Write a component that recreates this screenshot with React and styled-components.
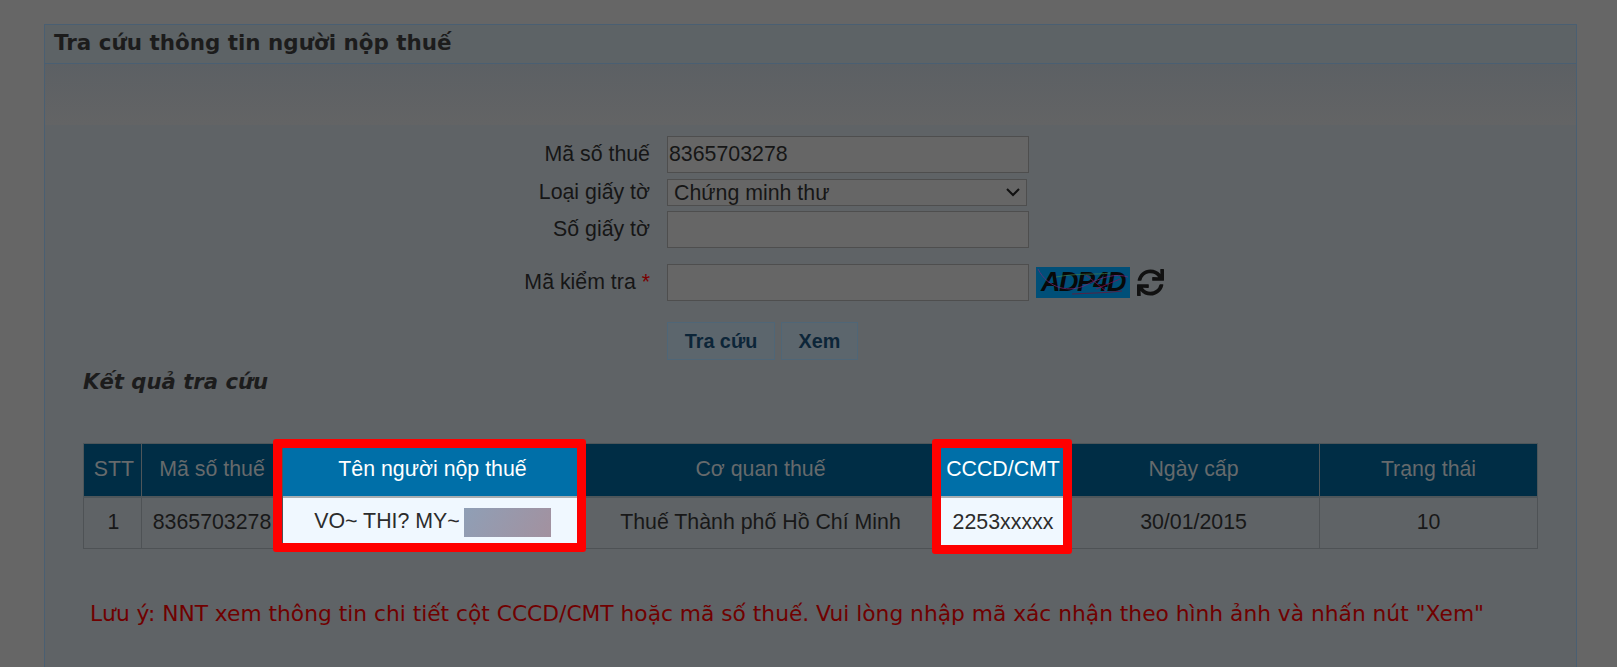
import React from "react";
import styled, { createGlobalStyle } from "styled-components";
import { FaSync } from "react-icons/fa";

const Global = createGlobalStyle`
  html, body { margin: 0; padding: 0; background: #666666; overflow: hidden; }
  body { font-family: "Liberation Sans", Arial, sans-serif; }
`;
const Page = styled.div`
  height: 667px; overflow: hidden; padding: 24px 40px 0 44px; box-sizing: border-box;
`;
const Panel = styled.section`
  border: 1px solid #4a5f72; border-bottom: 0; background: #5f6366; height: 660px; box-sizing: border-box;
`;
const PanelHeader = styled.header`
  height: 38px; border-bottom: 1px solid #4a5f72; background: #5d6366; display: flex; align-items: center; padding: 0 0 3px 9px; box-sizing: content-box;
  height: 35px;
`;
const PanelTitle = styled.h1`
  margin: 0; font: bold 21.44px "DejaVu Sans", Verdana, sans-serif; color: #1c1c1c;
`;
const PanelBody = styled.div`
  background: linear-gradient(#5c6064 0, #636465 61px, #5f6366 61px); padding-top: 72px;
`;
const Form = styled.form`
  display: flex; flex-direction: column; margin: 0;
`;
const FormRow = styled.div`
  display: flex; align-items: center; gap: 17px; margin-top: ${p => p.$top || 0}px;
`;
const Label = styled.label`
  width: 605px; text-align: right; font-size: 21.33px; color: #161616; flex: none;
`;
const Star = styled.span` color: #7a0000; `;
const TextBox = styled.input`
  width: 362px; height: 37px; box-sizing: border-box; border: 1px solid #4e4e4e; background: #666666; padding: 0 0 0 1px;
  font: 21.33px "Liberation Sans", Arial, sans-serif; color: #161616; outline: none; border-radius: 0;
`;
const SelectWrap = styled.span` position: relative; display: flex; `;
const Select = styled.select`
  appearance: none; width: 360px; height: 27px; box-sizing: border-box; border: 1px solid #4e4e4e; background-color: #666666; padding-left: 6px;
  font: 21.33px "Liberation Sans", Arial, sans-serif; color: #161616; border-radius: 0; outline: none;
`;
const Chevron = styled.svg` position: absolute; right: 6px; top: 8px; pointer-events: none; `;
const Captcha = styled.span`
  position: relative; display: flex; align-items: center; justify-content: center; width: 94px; height: 31px; background: #004f78; margin-left: -10px; overflow: hidden;
  font: italic bold 27px "Liberation Sans", Arial, sans-serif; color: #080808; letter-spacing: -1.5px;
`;
const Noise = styled.svg` position: absolute; inset: 0; opacity: 0.7; `;
const Refresh = styled.span` display: flex; color: #111; font-size: 27px; margin-left: -10px; `;
const Actions = styled.div`
  display: flex; gap: 6px; margin-left: 622px; margin-top: 21px;
`;
const Action = styled.button`
  height: 38px; width: ${p => p.$w}px; box-sizing: border-box; border: 1px solid #4f6677; background: #5c666d; color: #0c2538; padding: 0;
  font: bold 19.8px "Liberation Sans", Arial, sans-serif;
`;
const Results = styled.div`
  padding-left: 38px; width: 1454px; box-sizing: content-box;
`;
const ResultsTitle = styled.h2`
  margin: 0; height: 34px; margin-top: 5px; font: italic bold 21.2px "DejaVu Sans", Verdana, sans-serif; color: #1c1c1c; line-height: 34px;
`;
const TableWrap = styled.div` position: relative; margin-top: 44px; `;
const Table = styled.table`
  width: 1454px; table-layout: fixed; border-collapse: collapse; font-size: 21.33px;
`;
const Th = styled.th`
  height: 53px; padding: 0 0 0 ${p => p.$shift || 0}px; font-weight: normal; text-align: center; white-space: nowrap; box-sizing: border-box;
  border: 1px solid #4e565a; border-bottom: 2px solid ${p => p.$hi ? "#a8aeb2" : "#4e565a"};
  background: ${p => p.$hi ? "#006fa8" : "#002d45"}; color: ${p => p.$hi ? "#ffffff" : "#666a6c"};
`;
const Td = styled.td`
  height: 52px; padding: 0 0 0 ${p => p.$shift || 0}px; text-align: center; white-space: nowrap; box-sizing: border-box;
  border: 1px solid #4e5255;
  background: ${p => p.$hi ? "#f0f8ff" : "#5f6366"}; color: ${p => p.$hi ? "#2c2c2c" : "#181818"};
`;
const Mask = styled.span`
  display: inline-block; vertical-align: middle; width: 87px; height: 29px; margin-left: 4px;
  background: linear-gradient(120deg, #8f9fb6, #a3919f);
`;
const Frame = styled.div`
  position: absolute; top: -4px; left: ${p => p.$left}px; width: ${p => p.$w}px; height: ${p => p.$h}px;
  box-sizing: border-box; border: 9px solid #ff0000; border-radius: 3px; pointer-events: none;
`;
const Note = styled.p`
  margin: 52px 0 0 7px; font: 21.75px "DejaVu Sans", Verdana, sans-serif; color: #700000; white-space: nowrap;
`;

const cols = [58, 141, 300, 356, 129, 252, 218];

export default function App() {
  return (
    <>
      <Global />
      <Page>
        <Panel>
          <PanelHeader><PanelTitle>Tra cứu thông tin người nộp thuế</PanelTitle></PanelHeader>
          <PanelBody>
            <Form onSubmit={e => e.preventDefault()}>
              <FormRow>
                <Label>Mã số thuế</Label>
                <TextBox defaultValue="8365703278" />
              </FormRow>
              <FormRow $top={6}>
                <Label>Loại giấy tờ</Label>
                <SelectWrap>
                  <Select defaultValue="cmt"><option value="cmt">Chứng minh thư</option></Select>
                  <Chevron width="16" height="11" viewBox="0 0 16 11" fill="none">
                    <path d="M2 2l6 6 6-6" stroke="#111" strokeWidth="2" />
                  </Chevron>
                </SelectWrap>
              </FormRow>
              <FormRow $top={5}>
                <Label>Số giấy tờ</Label>
                <TextBox />
              </FormRow>
              <FormRow $top={16}>
                <Label>Mã kiểm tra <Star>*</Star></Label>
                <TextBox />
                <Captcha>
                  ADP4D
                  <Noise width="94" height="31" viewBox="0 0 94 31" fill="none">
                    <path d="M2 2C12 22 34 26 50 18S80 6 92 10" stroke="#7b2a7b" strokeWidth="1" />
                    <path d="M20 10C40 6 60 8 74 6" stroke="#3f7f50" strokeWidth="1" />
                    <path d="M36 27C54 26 70 26 86 24" stroke="#7a1030" strokeWidth="1" />
                    <path d="M50 8L70 24M60 22L84 12" stroke="#8a1050" strokeWidth="1" />
                  </Noise>
                </Captcha>
                <Refresh><FaSync /></Refresh>
              </FormRow>
              <Actions>
                <Action $w={108}>Tra cứu</Action>
                <Action $w={77}>Xem</Action>
              </Actions>
            </Form>
            <Results>
              <ResultsTitle>Kết quả tra cứu</ResultsTitle>
              <TableWrap>
                <Table>
                  <colgroup>{cols.map((w, i) => <col key={i} style={{ width: w }} />)}</colgroup>
                  <thead>
                    <tr>
                      <Th $shift={3}>STT</Th>
                      <Th>Mã số thuế</Th>
                      <Th $hi>Tên người nộp thuế</Th>
                      <Th>Cơ quan thuế</Th>
                      <Th $hi>CCCD/CMT</Th>
                      <Th>Ngày cấp</Th>
                      <Th>Trạng thái</Th>
                    </tr>
                  </thead>
                  <tbody>
                    <tr>
                      <Td $shift={2}>1</Td>
                      <Td>8365703278</Td>
                      <Td $hi>VO~ THI? MY~<Mask /></Td>
                      <Td>Thuế Thành phố Hồ Chí Minh</Td>
                      <Td $hi>2253xxxxx</Td>
                      <Td>30/01/2015</Td>
                      <Td>10</Td>
                    </tr>
                  </tbody>
                </Table>
                <Frame $left={190} $w={313} $h={113} />
                <Frame $left={849} $w={140} $h={115} />
              </TableWrap>
              <Note>Lưu ý: NNT xem thông tin chi tiết cột CCCD/CMT hoặc mã số thuế. Vui lòng nhập mã xác nhận theo hình ảnh và nhấn nút "Xem"</Note>
            </Results>
          </PanelBody>
        </Panel>
      </Page>
    </>
  );
}
